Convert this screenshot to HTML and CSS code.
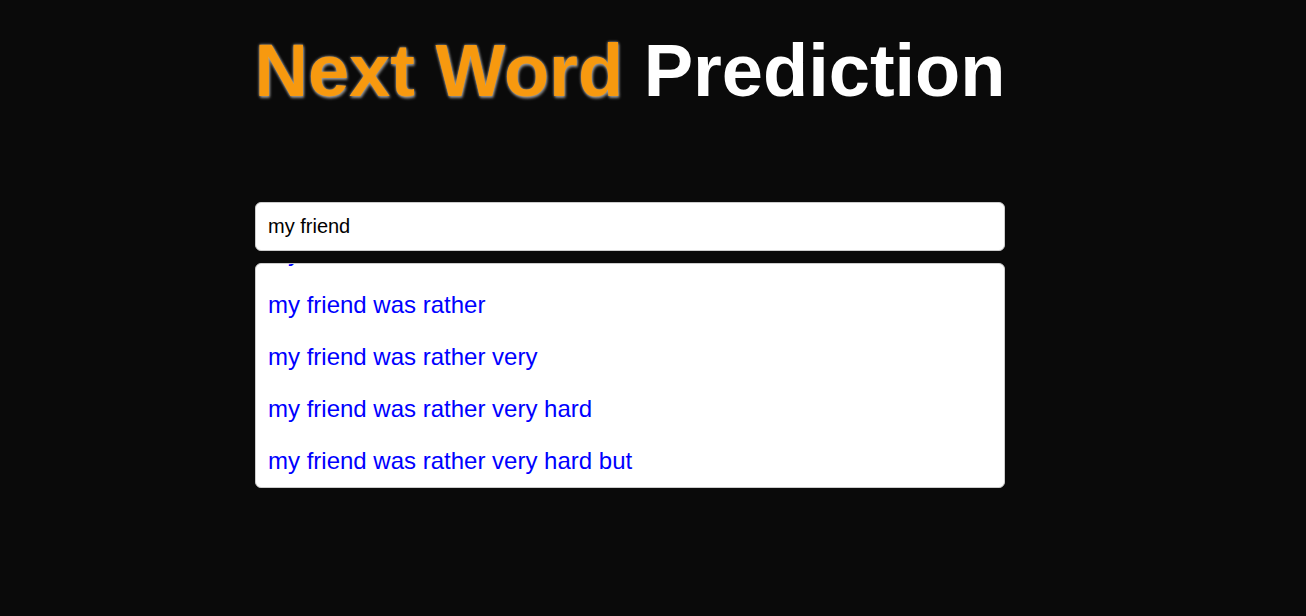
FILE: index.html
```html
<!DOCTYPE html>
<html lang="en">
<head>
<meta charset="utf-8">
<title>Next Word Prediction</title>
<link rel="stylesheet" href="styles.css">
</head>
<body>
<div class="page">
  <h1 class="title"><span class="accent">Next Word</span> Prediction</h1>
  <div class="search">
    <input class="search-input" type="text" value="my friend">
    <ul class="suggestions">
      <li class="suggestion">my friend was</li>
      <li class="suggestion">my friend was rather</li>
      <li class="suggestion">my friend was rather very</li>
      <li class="suggestion">my friend was rather very hard</li>
      <li class="suggestion">my friend was rather very hard but</li>
    </ul>
  </div>
</div>
</body>
</html>
```

FILE: styles.css
```css
html, body {
  margin: 0;
  padding: 0;
  background: #0a0a0a;
  height: 100%;
}
body {
  font-family: "Liberation Sans", Arial, sans-serif;
}
.page {
  width: 1260px;
  display: flex;
  flex-direction: column;
  align-items: center;
}
.title {
  margin: 29px 0 0;
  font-size: 74px;
  font-weight: bold;
  line-height: 84px;
  color: #ffffff;
  white-space: nowrap;
}
.accent {
  color: #f7990f;
  text-shadow: 0 0 3px #b0b0b0, 1px 2px 3px #808080;
}
.search {
  width: 750px;
  margin-top: 89px;
  display: flex;
  flex-direction: column;
  gap: 12px;
}
.search-input {
  box-sizing: border-box;
  width: 100%;
  height: 49px;
  margin: 0;
  padding: 0 12px;
  border: 1px solid #cccccc;
  border-radius: 6px;
  background: #ffffff;
  font-family: "Liberation Sans", Arial, sans-serif;
  font-size: 20px;
  color: #000000;
  outline: none;
}
.suggestions {
  box-sizing: border-box;
  list-style: none;
  margin: 0;
  padding: 0;
  height: 225px;
  border: 1px solid #cccccc;
  border-radius: 6px;
  background: #ffffff;
  overflow: hidden;
  display: flex;
  flex-direction: column;
  justify-content: flex-end;
}
.suggestion {
  flex: none;
  height: 52px;
  padding: 0 12px;
  display: flex;
  align-items: center;
  font-size: 24px;
  color: #0000ff;
}
```
